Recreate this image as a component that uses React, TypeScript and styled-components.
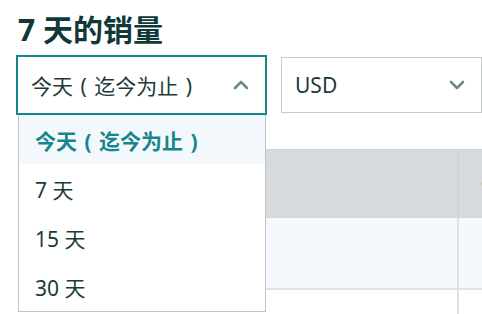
import React from "react";
import styled, { createGlobalStyle } from "styled-components";

const Global = createGlobalStyle`
  html, body { margin: 0; padding: 0; background: #ffffff; overflow: hidden; }
  body { font-family: "Noto Sans", "Noto Sans CJK SC", sans-serif; color: #1d3a3a; }
  * { box-sizing: border-box; }
`;

const Page = styled.div`
  width: 482px;
  height: 314px;
  padding: 12px 0 0 16px;
  overflow: hidden;
`;

const Heading = styled.h2`
  margin: 0 0 7px 2px;
  font-size: 30px;
  line-height: 36px;
  font-weight: 700;
  color: #103838;
  white-space: nowrap;
`;

const Controls = styled.div`
  display: flex;
  align-items: center;
  gap: 14px;
  position: relative;
  z-index: 2;
`;

const SelectWrap = styled.div`
  position: relative;
  flex: none;
`;

const Label = styled.span`
  word-spacing: 2px;
`;

const SelectBox = styled.div<{ $open?: boolean; $w: number }>`
  width: ${(p) => p.$w}px;
  height: ${(p) => (p.$open ? 60 : 56)}px;
  border: ${(p) => (p.$open ? "2px solid #17868c" : "1.5px solid #c3cbcd")};
  background: #fff;
  display: flex;
  align-items: center;
  justify-content: space-between;
  padding: 0 16px 0 13px;
  font-size: 21px;
  color: #1d3a3a;
  white-space: nowrap;
`;

const Chevron = styled.svg`
  width: 16px;
  height: 10px;
  flex: none;
`;

const Menu = styled.ul`
  position: absolute;
  top: 100%;
  left: 2px;
  width: 248px;
  margin: 0;
  padding: 0;
  list-style: none;
  background: #fff;
  border: 1.5px solid #bcc5c8;
  border-top: none;
`;

const Item = styled.li<{ $active?: boolean }>`
  height: 49px;
  display: flex;
  align-items: center;
  padding-left: 16px;
  font-size: 21px;
  white-space: nowrap;
  background: ${(p) => (p.$active ? "#f3f8fc" : "#fff")};
  color: ${(p) => (p.$active ? "#17868c" : "#1d3a3a")};
  font-weight: ${(p) => (p.$active ? 700 : 400)};
`;

const Table = styled.div`
  margin: 34px 0 0 4px;
  display: grid;
  grid-template-columns: 437px 200px;
`;

const HeadCell = styled.div<{ $last?: boolean }>`
  height: 69px;
  background: #d6dadd;
  border-top: 1px solid #ccd1d4;
  border-left: ${(p) => (p.$last ? "2px solid #cfd4d7" : "none")};
  display: flex;
  align-items: center;
  padding-left: 22px;
  font-size: 21px;
  font-weight: 700;
  color: #1d3a3a;
  white-space: nowrap;
`;

const Cell = styled.div<{ $last?: boolean; $striped?: boolean }>`
  height: ${(p) => (p.$striped ? 72 : 60)}px;
  background: ${(p) => (p.$striped ? "#f5f9fd" : "#fff")};
  border-bottom: ${(p) => (p.$striped ? "2px solid #dde2e6" : "none")};
  border-left: ${(p) => (p.$last ? "2px solid #dde1e4" : "none")};
`;

const up = "M2 8 L8 2 L14 8";
const down = "M2 2 L8 8 L14 2";

export default function App() {
  return (
    <>
      <Global />
      <Page>
        <Heading>7 天的销量</Heading>
        <Controls>
          <SelectWrap>
            <SelectBox $open $w={251}>
              <Label>今天 ( 迄今为止 )</Label>
              <Chevron viewBox="0 0 16 10">
                <path d={up} fill="none" stroke="#6b8a88" strokeWidth="2.6" strokeLinecap="round" strokeLinejoin="round" />
              </Chevron>
            </SelectBox>
            <Menu>
              <Item $active><Label>今天 ( 迄今为止 )</Label></Item>
              <Item>7 天</Item>
              <Item>15 天</Item>
              <Item>30 天</Item>
            </Menu>
          </SelectWrap>
          <SelectBox $w={209}>
            <span>USD</span>
            <Chevron viewBox="0 0 16 10">
              <path d={down} fill="none" stroke="#6b8a88" strokeWidth="2.6" strokeLinecap="round" strokeLinejoin="round" />
            </Chevron>
          </SelectBox>
        </Controls>
        <Table>
          <HeadCell />
          <HeadCell $last>订单</HeadCell>
          <Cell $striped />
          <Cell $striped $last />
          <Cell />
          <Cell $last />
        </Table>
      </Page>
    </>
  );
}
